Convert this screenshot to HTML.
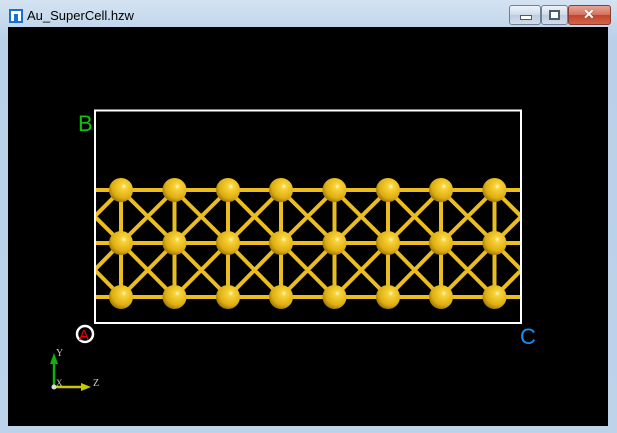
<!DOCTYPE html>
<html><head><meta charset="utf-8"><style>
html,body{margin:0;padding:0;width:617px;height:433px;overflow:hidden;background:#bcd3ea;font-family:"Liberation Sans",sans-serif}
.frame{position:absolute;left:0;top:0;width:617px;height:433px;background:linear-gradient(#d4e3f2,#b9d0e8 40px,#bcd3ea);}
.title{position:absolute;left:27px;top:8px;font-size:13px;color:#000}
.view{position:absolute;left:8px;top:27px;width:600px;height:399px;background:#000}
.btn{position:absolute;top:5px;height:18px;border:1px solid #6f7f96;border-radius:3px;background:linear-gradient(#eef3f9,#cfdbe9 50%,#bccbdf 51%,#d2ddea)}
</style></head><body>
<div class="frame">
<svg style="position:absolute;left:9px;top:9px" width="14" height="14" viewBox="0 0 14 14"><rect width="14" height="14" fill="#1a6fd0"/><rect x="2" y="5" width="3" height="7" fill="#fff"/><rect x="2" y="2" width="10" height="3" fill="#fff"/><rect x="9" y="5" width="3" height="7" fill="#fff"/><rect x="6" y="7" width="2" height="5" fill="#1a6fd0"/></svg>
<div class="title">Au_SuperCell.hzw</div>
<div class="btn" style="left:509px;width:30px"><div style="position:absolute;left:10px;top:9px;width:10px;height:3px;background:#fff;border:1px solid #4a5a70"></div></div>
<div class="btn" style="left:541px;width:25px"><div style="position:absolute;left:7px;top:4px;width:7px;height:6px;border:2px solid #4a5a70;background:#fff"></div></div>
<div class="btn" style="left:568px;width:41px;border-color:#8a3a2e;background:linear-gradient(#e9a597,#d4705c 50%,#c2442b 51%,#d0654a)"><div style="position:absolute;left:14px;top:0px;color:#fff;font-weight:bold;font-size:14px;text-shadow:0 0 1px #333">✕</div></div>
<div class="view"></div>
<svg style="position:absolute;left:0;top:0" width="617" height="433">
<defs>
<radialGradient id="g" cx="0.62" cy="0.35" r="0.7"><stop offset="0" stop-color="#fffbe0"/><stop offset="0.15" stop-color="#f9d43a"/><stop offset="0.7" stop-color="#deae12"/><stop offset="1" stop-color="#9a7405"/></radialGradient>
<clipPath id="c"><rect x="95" y="100" width="426" height="220"/></clipPath>
</defs>
<g stroke="#ecbd1e" stroke-width="4" clip-path="url(#c)">
<line x1="95" y1="190" x2="521" y2="190"/><line x1="95" y1="243" x2="521" y2="243"/><line x1="95" y1="297" x2="521" y2="297"/>
<path d="M121 190V297M174.5 190V297M228 190V297M281 190V297M334.5 190V297M388 190V297M441 190V297M494.5 190V297"/>
<path d="M68 190L121.5 243M121 190L174.5 243M174.5 190L228 243M228 190L281 243M281 190L334.5 243M334.5 190L388 243M388 190L441 243M441 190L494.5 243M494.5 190L548 243
M121 190L68 243M174.5 190L121 243M228 190L174.5 243M281 190L228 243M334.5 190L281 243M388 190L334.5 243M441 190L388 243M494.5 190L441 243M548 190L494.5 243
M68 243L121.5 297M121 243L174.5 297M174.5 243L228 297M228 243L281 297M281 243L334.5 297M334.5 243L388 297M388 243L441 297M441 243L494.5 297M494.5 243L548 297
M121 243L68 297M174.5 243L121 297M228 243L174.5 297M281 243L228 297M334.5 243L281 297M388 243L334.5 297M441 243L388 297M494.5 243L441 297M548 243L494.5 297"/>
</g>
<g fill="url(#g)">
<circle cx="121" cy="190" r="12"/><circle cx="174.5" cy="190" r="12"/><circle cx="228" cy="190" r="12"/><circle cx="281" cy="190" r="12"/><circle cx="334.5" cy="190" r="12"/><circle cx="388" cy="190" r="12"/><circle cx="441" cy="190" r="12"/><circle cx="494.5" cy="190" r="12"/>
<circle cx="121" cy="243" r="12"/><circle cx="174.5" cy="243" r="12"/><circle cx="228" cy="243" r="12"/><circle cx="281" cy="243" r="12"/><circle cx="334.5" cy="243" r="12"/><circle cx="388" cy="243" r="12"/><circle cx="441" cy="243" r="12"/><circle cx="494.5" cy="243" r="12"/>
<circle cx="121" cy="297" r="12"/><circle cx="174.5" cy="297" r="12"/><circle cx="228" cy="297" r="12"/><circle cx="281" cy="297" r="12"/><circle cx="334.5" cy="297" r="12"/><circle cx="388" cy="297" r="12"/><circle cx="441" cy="297" r="12"/><circle cx="494.5" cy="297" r="12"/>
</g>
<rect x="95" y="110.5" width="426" height="212.5" fill="none" stroke="#fff" stroke-width="2"/>
<text x="78" y="131" fill="#10c010" font-size="22" font-family="Liberation Sans">B</text>
<text x="520" y="344" fill="#1a8ff0" font-size="22" font-family="Liberation Sans">C</text>
<circle cx="85" cy="334" r="8" fill="none" stroke="#fff" stroke-width="2.5"/>
<text x="79" y="340" fill="#e00" font-size="15" font-family="Liberation Sans">A</text>
<line x1="54" y1="387" x2="54" y2="362" stroke="#10b010" stroke-width="2.5"/>
<polygon points="50,364 58,364 54,353" fill="#10b010"/>
<line x1="54" y1="387" x2="83" y2="387" stroke="#c8c800" stroke-width="2.5"/>
<polygon points="81,383 81,391 91,387" fill="#c8c800"/>
<circle cx="54" cy="387" r="2.5" fill="#ddd"/>
<text x="56" y="356" fill="#ccc" font-size="10" font-family="Liberation Serif">Y</text>
<text x="56" y="386" fill="#ccc" font-size="9" font-family="Liberation Serif">X</text>
<text x="93" y="386" fill="#ccc" font-size="10" font-family="Liberation Serif">Z</text>
</svg>
</div>
</body></html>
